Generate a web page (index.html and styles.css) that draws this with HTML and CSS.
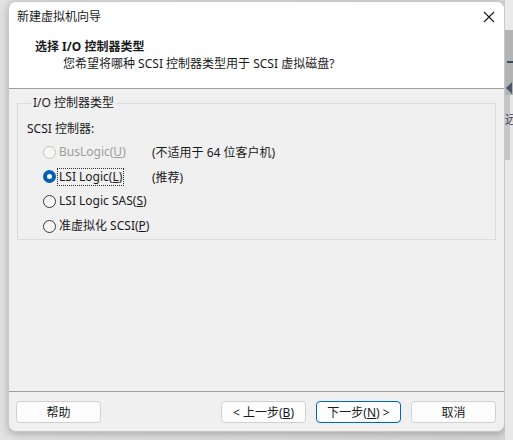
FILE: index.html
```html
<!DOCTYPE html>
<html lang="zh-CN">
<head>
    <meta charset="UTF-8">
    <title>新建虚拟机向导</title>
    <link rel="stylesheet" href="styles.css">
</head>
<body>

<div class="desk">
    <div class="dialog">
        <div class="titlebar">
            <span class="title">新建虚拟机向导</span>
            <svg class="close" width="12" height="12" viewBox="0 0 12 12">
                <path d="M1 1 L11 11 M11 1 L1 11" stroke="#1a1a1a" stroke-width="1.1" fill="none"/>
            </svg>
        </div>

        <div class="header">
            <div class="heading">选择 I/O 控制器类型</div>
            <div class="subtitle">您希望将哪种 SCSI 控制器类型用于 SCSI 虚拟磁盘?</div>
        </div>

        <div class="body">
            <fieldset class="group">
                <legend>I/O 控制器类型</legend>
                <div class="label">SCSI 控制器:</div>

                <div class="options">
                    <div class="option disabled">
                        <div class="choice">
                            <span class="radio"></span>
                            <span class="opt-text">BusLogic(<u>U</u>)</span>
                        </div>
                        <span class="note">(不适用于 64 位客户机)</span>
                    </div>
                    <div class="option">
                        <div class="choice">
                            <span class="radio checked"></span>
                            <span class="opt-text focus">LSI Logic(<u>L</u>)</span>
                        </div>
                        <span class="note">(推荐)</span>
                    </div>
                    <div class="option">
                        <div class="choice">
                            <span class="radio"></span>
                            <span class="opt-text">LSI Logic SAS(<u>S</u>)</span>
                        </div>
                    </div>
                    <div class="option">
                        <div class="choice">
                            <span class="radio"></span>
                            <span class="opt-text">准虚拟化 SCSI(<u>P</u>)</span>
                        </div>
                    </div>
                </div>
            </fieldset>
        </div>

        <div class="footer">
            <button class="btn">帮助</button>
            <div class="spacer"></div>
            <button class="btn">&lt; 上一步(<u>B</u>)</button>
            <button class="btn primary">下一步(<u>N</u>) &gt;</button>
            <button class="btn">取消</button>
        </div>
    </div>

    <!-- 背后窗口的一角 -->
    <div class="behind">
        <div class="b-top"></div>
        <div class="b-bar">
            <span class="b-dash"></span>
            <span class="b-arrow"></span>
        </div>
        <div class="b-mid"><span class="b-char">远</span></div>
        <div class="b-low"></div>
    </div>
</div>

</body>
</html>
```

FILE: styles.css
```css
* {
    box-sizing: border-box;
}
body {
    margin: 0;
    font-family: "Noto Sans", "Noto Sans CJK SC", sans-serif;
    font-size: 12px;
    color: #1a1a1a;
    background: #e4e4e4;
}
.desk {
    display: flex;
    width: 513px;
    height: 440px;
    overflow: hidden;
    background: linear-gradient(to right, #e2e2e2, #d6d6d6);
}
.dialog {
    width: 497px;
    height: 431px;
    margin: 1px 0 0 8px;
    background: #f0f0f0;
    border-radius: 8px;
    border: 1px solid #c8c8c8;
    box-shadow: 0 2px 8px rgba(0, 0, 0, 0.25);
    display: flex;
    flex-direction: column;
    overflow: hidden;
    flex-shrink: 0;
}
.titlebar {
    height: 29px;
    background: white;
    display: flex;
    align-items: center;
    justify-content: space-between;
    padding: 0 9px 0 8px;
}
.title {
    line-height: 16px;
}
.header {
    background: white;
    height: 58px;
    padding: 7px 0 0 26px;
    border-bottom: 1px solid #a0a0a0;
}
.heading {
    font-weight: bold;
    line-height: 17px;
}
.subtitle {
    padding-left: 28px;
    line-height: 17px;
}
.body {
    flex: 1;
    padding: 6px 8px 0 8px;
}
.group {
    margin: 0;
    height: 145px;
    border: 1px solid #dcdcdc;
    border-radius: 0;
    padding: 0 0 0 9px;
}
.group legend {
    padding: 0 2px 0 1px;
    margin-left: 5px;
    line-height: 16px;
}
.label {
    margin-top: 10px;
    line-height: 16px;
}
.options {
    margin-top: 3px;
    padding-left: 16px;
}
.option {
    display: flex;
    align-items: center;
    height: 24.6px;
}
.choice {
    width: 109px;
    display: flex;
    align-items: center;
    flex-shrink: 0;
}
.radio {
    width: 13px;
    height: 13px;
    border-radius: 50%;
    border: 1px solid #3a3a3a;
    background: #f6f6f6;
    margin-right: 1px;
    flex-shrink: 0;
}
.radio.checked {
    border: 4px solid #005fb8;
    background: white;
}
.disabled .radio {
    border-color: #c4c4c4;
}
.disabled .opt-text {
    color: #9d9d9d;
}
.opt-text {
    line-height: 16px;
    padding: 0 1px;
    border: 1px dotted transparent;
    white-space: nowrap;
}
.opt-text.focus {
    border-color: #333;
}
.note {
    white-space: nowrap;
}
.footer {
    height: 40px;
    border-top: 1px solid #a0a0a0;
    display: flex;
    align-items: flex-start;
    padding: 9px 8px 0 7px;
    gap: 10px;
}
.spacer {
    flex: 1;
}
.btn {
    width: 85px;
    height: 22px;
    font: inherit;
    color: #1a1a1a;
    background: #fdfdfd;
    border: 1px solid #d0d0d0;
    border-radius: 4px;
    padding: 0;
}
.btn.primary {
    border: 1px solid #0067c0;
}
.behind {
    flex: 1;
    display: flex;
    flex-direction: column;
}
.b-top {
    height: 30px;
    background: #eaeaea;
}
.b-bar {
    height: 65px;
    background: #b4b4b4;
    position: relative;
}
.b-dash {
    position: absolute;
    left: 2px;
    top: 31px;
    width: 6px;
    height: 2px;
    background: #3a4a5a;
}
.b-arrow {
    position: absolute;
    left: 1px;
    top: 52px;
    border: 6px solid transparent;
    border-right-color: #4a5a6a;
    border-left-width: 0;
}
.b-mid {
    height: 65px;
    background: linear-gradient(to right, #c6c6c6 60%, #e6e6e6 60%);
    overflow: hidden;
    position: relative;
}
.b-char {
    position: absolute;
    left: 0;
    top: 15px;
    color: #4a3a6a;
}
.b-low {
    flex: 1;
    background: #e8e8e8;
}
```
